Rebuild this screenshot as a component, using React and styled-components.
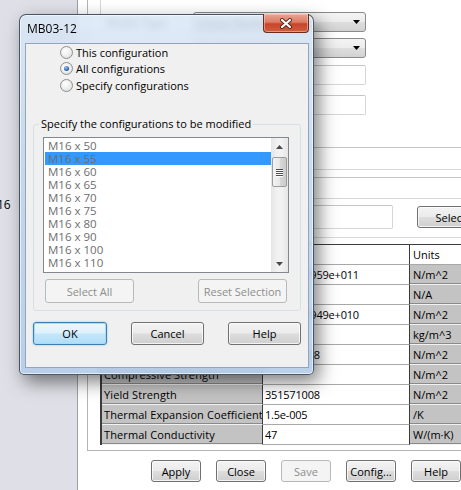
import React from 'react'
import styled, { createGlobalStyle } from 'styled-components'

const GlobalStyle = createGlobalStyle`
  html, body { margin: 0; padding: 0; background: #fff; }
  body {
    font-family: "Open Sans", "Liberation Sans", sans-serif;
    font-size: 11px;
    color: #000;
  }
  * { box-sizing: border-box; }
`

const configs = ['M16 x 50', 'M16 x 55', 'M16 x 60', 'M16 x 65', 'M16 x 70', 'M16 x 75', 'M16 x 80', 'M16 x 90', 'M16 x 100', 'M16 x 110']

const properties = [
  ['Elastic Modulus', '1.999999959e+011', 'N/m^2'],
  ["Poisson's Ratio", '0.29', 'N/A'],
  ['Shear Modulus', '7.699999949e+010', 'N/m^2'],
  ['Mass Density', '7900', 'kg/m^3'],
  ['Tensile Strength', '420507008', 'N/m^2'],
  ['Compressive Strength', '', 'N/m^2'],
  ['Yield Strength', '351571008', 'N/m^2'],
  ['Thermal Expansion Coefficient', '1.5e-005', '/K'],
  ['Thermal Conductivity', '47', 'W/(m·K)'],
]

/* ---------- page behind the dialog ---------- */

const Page = styled.div`
  position: relative;
  width: 461px;
  height: 490px;
  overflow: hidden;
  display: flex;
  background: #fff;
`

const LeftPanel = styled.div`
  width: 78px;
  flex: none;
  background: #dfe0e7;
  border-right: 1px solid #9d9ea6;
  padding-top: 198px;
`

const CutValue = styled.div`
  margin-left: -3px;
  font-size: 12px;
  line-height: 14px;
`

const Main = styled.div`
  flex: 1;
  min-width: 0;
  padding-left: 9px;
  display: flex;
  flex-direction: column;
`

const Frame = styled.div`
  height: 451px;
  flex: none;
  border-left: 1px solid #b4b4b4;
  border-bottom: 1px solid #b4b4b4;
  padding-left: 12px;
  display: flex;
  flex-direction: column;
`

const FormSection = styled.div`
  height: 244px;
  flex: none;
  border-left: 1px solid #d6d6d6;
  padding: 12px 0 0 6px;
  display: flex;
  flex-direction: column;
`

const FieldRow = styled.div`
  display: flex;
  align-items: center;
  height: ${p => p.$h}px;
  margin-top: ${p => p.$top || 0}px;
`

const FieldLabel = styled.div`
  width: 86px;
  flex: none;
  white-space: nowrap;
`

const Combo = styled.div`
  width: 173px;
  height: 100%;
  border: 1px solid #8a8a8a;
  border-radius: 3px;
  background: linear-gradient(180deg, #f4f4f4 0%, #ececec 50%, #dedede 51%, #d2d2d2 100%);
  display: flex;
  align-items: center;
  padding: 0 5px 0 4px;
  justify-content: space-between;
`

const TextBox = styled.div`
  width: ${p => p.$w}px;
  height: 100%;
  flex: none;
  border: 1px solid #d4d6da;
  border-top-color: #c2c4c8;
  border-radius: 2px;
  background: #fff;
  display: flex;
  align-items: center;
  padding-left: 4px;
`

const Separator = styled.div`
  height: 1px;
  margin-top: 8px;
  background: #d9d9d9;
`

const Caret = () => (
  <svg width="7" height="4" viewBox="0 0 7 4">
    <path d="M0 0h7L3.5 4z" fill="#000" />
  </svg>
)

const PropTable = styled.div`
  display: grid;
  grid-template-columns: 161px 147px 80px;
  grid-auto-rows: 20px;
  width: max-content;
  border-top: 1px solid #3c3c3c;
  border-left: 2px solid #3c3c3c;
`

const Cell = styled.div`
  padding-left: ${p => (p.$kind === 'unit' ? 3 : 2)}px;
  display: flex;
  align-items: center;
  white-space: nowrap;
  overflow: hidden;
  font-size: 11px;
  letter-spacing: ${p => (p.$kind === 'value' ? '-0.2px' : p.$kind === 'label' ? '0.1px' : 'normal')};
  background: ${p => (p.$head ? '#fff' : p.$kind === 'value' ? '#fff' : '#c3c3c3')};
  border-right: ${p => (p.$kind === 'unit' ? 'none' : '1px solid #3c3c3c')};
  border-bottom: 1px solid ${p => (p.$kind === 'value' || p.$head ? '#a8a8a8' : '#f2f2f2')};
  box-shadow: ${p => (p.$kind !== 'value' && !p.$head ? 'inset 0 -1px 0 #8a8a8a' : 'none')};
`

const BottomBar = styled.div`
  display: flex;
  justify-content: flex-end;
  gap: 15px;
  padding-top: 9px;
`

/* ---------- shared button ---------- */

const WinButton = styled.button`
  font-family: inherit;
  font-size: 11px;
  width: ${p => p.$w}px;
  height: ${p => p.$h}px;
  margin-left: ${p => p.$gapLeft || 0}px;
  flex: none;
  padding: 0;
  border-radius: 3px;
  border: 1px solid ${p => (p.$disabled ? '#b6babd' : p.$default ? '#3c7fb1' : '#707070')};
  color: ${p => (p.$disabled ? '#8d8d8d' : '#000')};
  background: ${p =>
    p.$disabled
      ? '#f4f4f4'
      : p.$default
      ? 'linear-gradient(180deg, #edf7fd 0%, #dcf1fc 48%, #c4e7fb 52%, #b0ddf6 100%)'
      : 'linear-gradient(180deg, #f3f3f3 0%, #ebebeb 48%, #dddddd 52%, #cfcfcf 100%)'};
  box-shadow: ${p =>
    p.$default
      ? 'inset 0 0 0 1px #a8dcf6, 0 0 2px rgba(60,160,230,0.6)'
      : p.$disabled
      ? 'none'
      : 'inset 0 0 0 1px rgba(255,255,255,0.75)'};
`

/* ---------- dialog ---------- */

const Dialog = styled.div`
  position: absolute;
  left: 19px;
  top: 14px;
  width: 295px;
  height: 361px;
  border: 1px solid rgba(48, 62, 84, 0.85);
  border-radius: 7px 7px 5px 5px;
  padding: 0 4px 6px 5px;
  display: flex;
  flex-direction: column;
  background: linear-gradient(180deg, rgba(218, 231, 246, 0.84) 0%, rgba(194, 214, 238, 0.86) 40%, rgba(180, 204, 233, 0.9) 100%);
  backdrop-filter: blur(3.5px);
  box-shadow: inset 0 0 0 1px rgba(255, 255, 255, 0.6), 5px 7px 18px rgba(0, 0, 0, 0.5);
`

const TitleBar = styled.div`
  height: 28px;
  flex: none;
  display: flex;
  align-items: flex-start;
  padding-left: 2px;
`

const TitleText = styled.div`
  font-size: 12px;
  line-height: 16px;
  margin-top: 6px;
  color: #000;
`

const CloseButton = styled.div`
  margin-left: auto;
  margin-top: -1px;
  width: 46px;
  height: 19px;
  border: 1px solid #6a2b20;
  border-top: none;
  border-radius: 0 0 4px 4px;
  background: linear-gradient(180deg, #e9a593 0%, #dc7d66 45%, #c8452b 55%, #cf5e3f 100%);
  box-shadow: inset 0 0 0 1px rgba(255, 210, 190, 0.5);
  display: flex;
  align-items: center;
  justify-content: center;
`

const Client = styled.div`
  flex: 1;
  border: 1px solid #93a5bd;
  background: #f0f0f0;
  display: flex;
  flex-direction: column;
`

const RadioList = styled.div`
  padding-left: 34px;
  display: flex;
  flex-direction: column;
`

const RadioRow = styled.label`
  height: 16.5px;
  display: flex;
  align-items: center;
  gap: 3px;
`

const RadioDot = styled.span`
  width: 13px;
  height: 13px;
  flex: none;
  border-radius: 50%;
  border: 1px solid #8c8e90;
  background: radial-gradient(circle at 40% 35%, #ffffff 0%, #ececec 55%, #cfd1d3 100%);
  display: flex;
  align-items: center;
  justify-content: center;
  &::after {
    content: '';
    width: 5px;
    height: 5px;
    border-radius: 50%;
    background: ${p => (p.$checked ? 'radial-gradient(circle at 40% 35%, #9fd0f5 0%, #2f6cb6 55%, #163a6e 100%)' : 'transparent')};
  }
`

const Group = styled.fieldset`
  margin: 23.5px 7px 0;
  padding: 6px 11px 7px 9px;
  border: 1px solid #d5dfe5;
  border-radius: 3px;
  min-width: 0;
`

const GroupLegend = styled.legend`
  padding: 0 2px;
  margin-left: -4px;
  line-height: 14px;
`

const ListBox = styled.div`
  height: 136px;
  border: 1px solid #828790;
  background: #fff;
  display: flex;
`

const ListItems = styled.div`
  flex: 1;
  padding: 1px 0 0 1px;
  overflow: hidden;
`

const ListItem = styled.div`
  height: 13px;
  line-height: 13px;
  padding-left: 3px;
  font-size: 11.5px;
  color: #6d6d6d;
  background: ${p => (p.$selected ? '#3399ff' : 'transparent')};
`

const ScrollBar = styled.div`
  width: 17px;
  flex: none;
  background: linear-gradient(90deg, #e6e6e6, #f2f2f2 40%, #f2f2f2 60%, #e6e6e6);
  display: flex;
  flex-direction: column;
  align-items: center;
`

const ScrollArrow = styled.div`
  height: 17px;
  width: 100%;
  flex: none;
  display: flex;
  align-items: center;
  justify-content: center;
  margin-top: ${p => (p.$bottom ? 'auto' : '0')};
`

const ScrollThumb = styled.div`
  width: 15px;
  height: 30px;
  margin-top: 2px;
  border: 1px solid #9b9da0;
  border-radius: 2px;
  background: linear-gradient(90deg, #f3f3f3 0%, #e8e8e8 50%, #d8d8d8 51%, #cbcbcb 100%);
  display: flex;
  flex-direction: column;
  align-items: center;
  justify-content: center;
  gap: 1px;
`

const Grip = styled.span`
  width: 7px;
  height: 1px;
  background: #4e4e4e;
  box-shadow: 0 1px 0 #fff;
`

const GroupButtons = styled.div`
  display: flex;
  justify-content: space-between;
  padding: 0 2px;
  margin-top: 6px;
`

const DialogButtons = styled.div`
  display: flex;
  justify-content: space-between;
  padding: 0 7px;
  margin-top: 11px;
`

const Arrow = ({ down }) => (
  <svg width="7" height="4" viewBox="0 0 7 4">
    <path d={down ? 'M0 0h7L3.5 4z' : 'M0 4h7L3.5 0z'} fill="#4a4a4a" />
  </svg>
)

const CloseGlyph = () => (
  <svg width="14" height="11" viewBox="0 0 14 11">
    <path d="M3 2l8 7M11 2l-8 7" stroke="#5b2418" strokeWidth="4" strokeLinecap="round" />
    <path d="M3 2l8 7M11 2l-8 7" stroke="#fff" strokeWidth="2.2" strokeLinecap="round" />
  </svg>
)

const radios = [
  ['This configuration', false],
  ['All configurations', true],
  ['Specify configurations', false],
]

export default function App() {
  return (
    <Page>
      <GlobalStyle />
      <LeftPanel>
        <CutValue>16</CutValue>
      </LeftPanel>
      <Main>
        <Frame>
          <FormSection>
            <FieldRow $h={20}>
              <FieldLabel>Model Type:</FieldLabel>
              <Combo>
                <span>Linear Elastic Isotropic</span>
                <Caret />
              </Combo>
            </FieldRow>
            <FieldRow $h={20} $top={6}>
              <FieldLabel>Units:</FieldLabel>
              <Combo>
                <span>SI - N/m^2 (Pa)</span>
                <Caret />
              </Combo>
            </FieldRow>
            <FieldRow $h={20} $top={7}>
              <FieldLabel>Category:</FieldLabel>
              <TextBox $w={173}>Steel</TextBox>
            </FieldRow>
            <FieldRow $h={20} $top={10}>
              <FieldLabel>Name:</FieldLabel>
              <TextBox $w={173}>AISI 1020</TextBox>
            </FieldRow>
            <FieldRow $h={23} $top={32}>
              <FieldLabel>Description:</FieldLabel>
              <TextBox $w={300} />
            </FieldRow>
            <FieldRow $h={22} $top={7}>
              <FieldLabel>Source:</FieldLabel>
              <TextBox $w={300} />
            </FieldRow>
            <FieldRow $h={24} $top={6}>
              <FieldLabel>Sustainability:</FieldLabel>
              <TextBox $w={200}>Defined</TextBox>
              <WinButton $w={76} $h={22} $gapLeft={24}>Select...</WinButton>
            </FieldRow>
            <Separator />
          </FormSection>
          <PropTable>
            <Cell $head $kind="label">Property</Cell>
            <Cell $head $kind="value">Value</Cell>
            <Cell $head $kind="unit">Units</Cell>
            {properties.map(([label, value, unit]) => (
              <React.Fragment key={label}>
                <Cell $kind="label">{label}</Cell>
                <Cell $kind="value">{value}</Cell>
                <Cell $kind="unit">{unit}</Cell>
              </React.Fragment>
            ))}
          </PropTable>
        </Frame>
        <BottomBar>
          <WinButton $w={50} $h={22}>Apply</WinButton>
          <WinButton $w={50} $h={22}>Close</WinButton>
          <WinButton $w={50} $h={22} $disabled>Save</WinButton>
          <WinButton $w={50} $h={22}>Config...</WinButton>
          <WinButton $w={50} $h={22}>Help</WinButton>
        </BottomBar>
      </Main>

      <Dialog>
        <TitleBar>
          <TitleText>MB03-12</TitleText>
          <CloseButton>
            <CloseGlyph />
          </CloseButton>
        </TitleBar>
        <Client>
          <RadioList>
            {radios.map(([text, checked]) => (
              <RadioRow key={text}>
                <RadioDot $checked={checked} />
                {text}
              </RadioRow>
            ))}
          </RadioList>
          <Group>
            <GroupLegend>Specify the configurations to be modified</GroupLegend>
            <ListBox>
              <ListItems>
                {configs.map((c, i) => (
                  <ListItem key={c} $selected={i === 1}>{c}</ListItem>
                ))}
              </ListItems>
              <ScrollBar>
                <ScrollArrow><Arrow /></ScrollArrow>
                <ScrollThumb>
                  <Grip />
                  <Grip />
                  <Grip />
                  <Grip />
                </ScrollThumb>
                <ScrollArrow $bottom><Arrow down /></ScrollArrow>
              </ScrollBar>
            </ListBox>
            <GroupButtons>
              <WinButton $w={89} $h={24} $disabled>Select All</WinButton>
              <WinButton $w={89} $h={24} $disabled>Reset Selection</WinButton>
            </GroupButtons>
          </Group>
          <DialogButtons>
            <WinButton $w={74} $h={23} $default>OK</WinButton>
            <WinButton $w={73} $h={23}>Cancel</WinButton>
            <WinButton $w={73} $h={23}>Help</WinButton>
          </DialogButtons>
        </Client>
      </Dialog>
    </Page>
  )
}
